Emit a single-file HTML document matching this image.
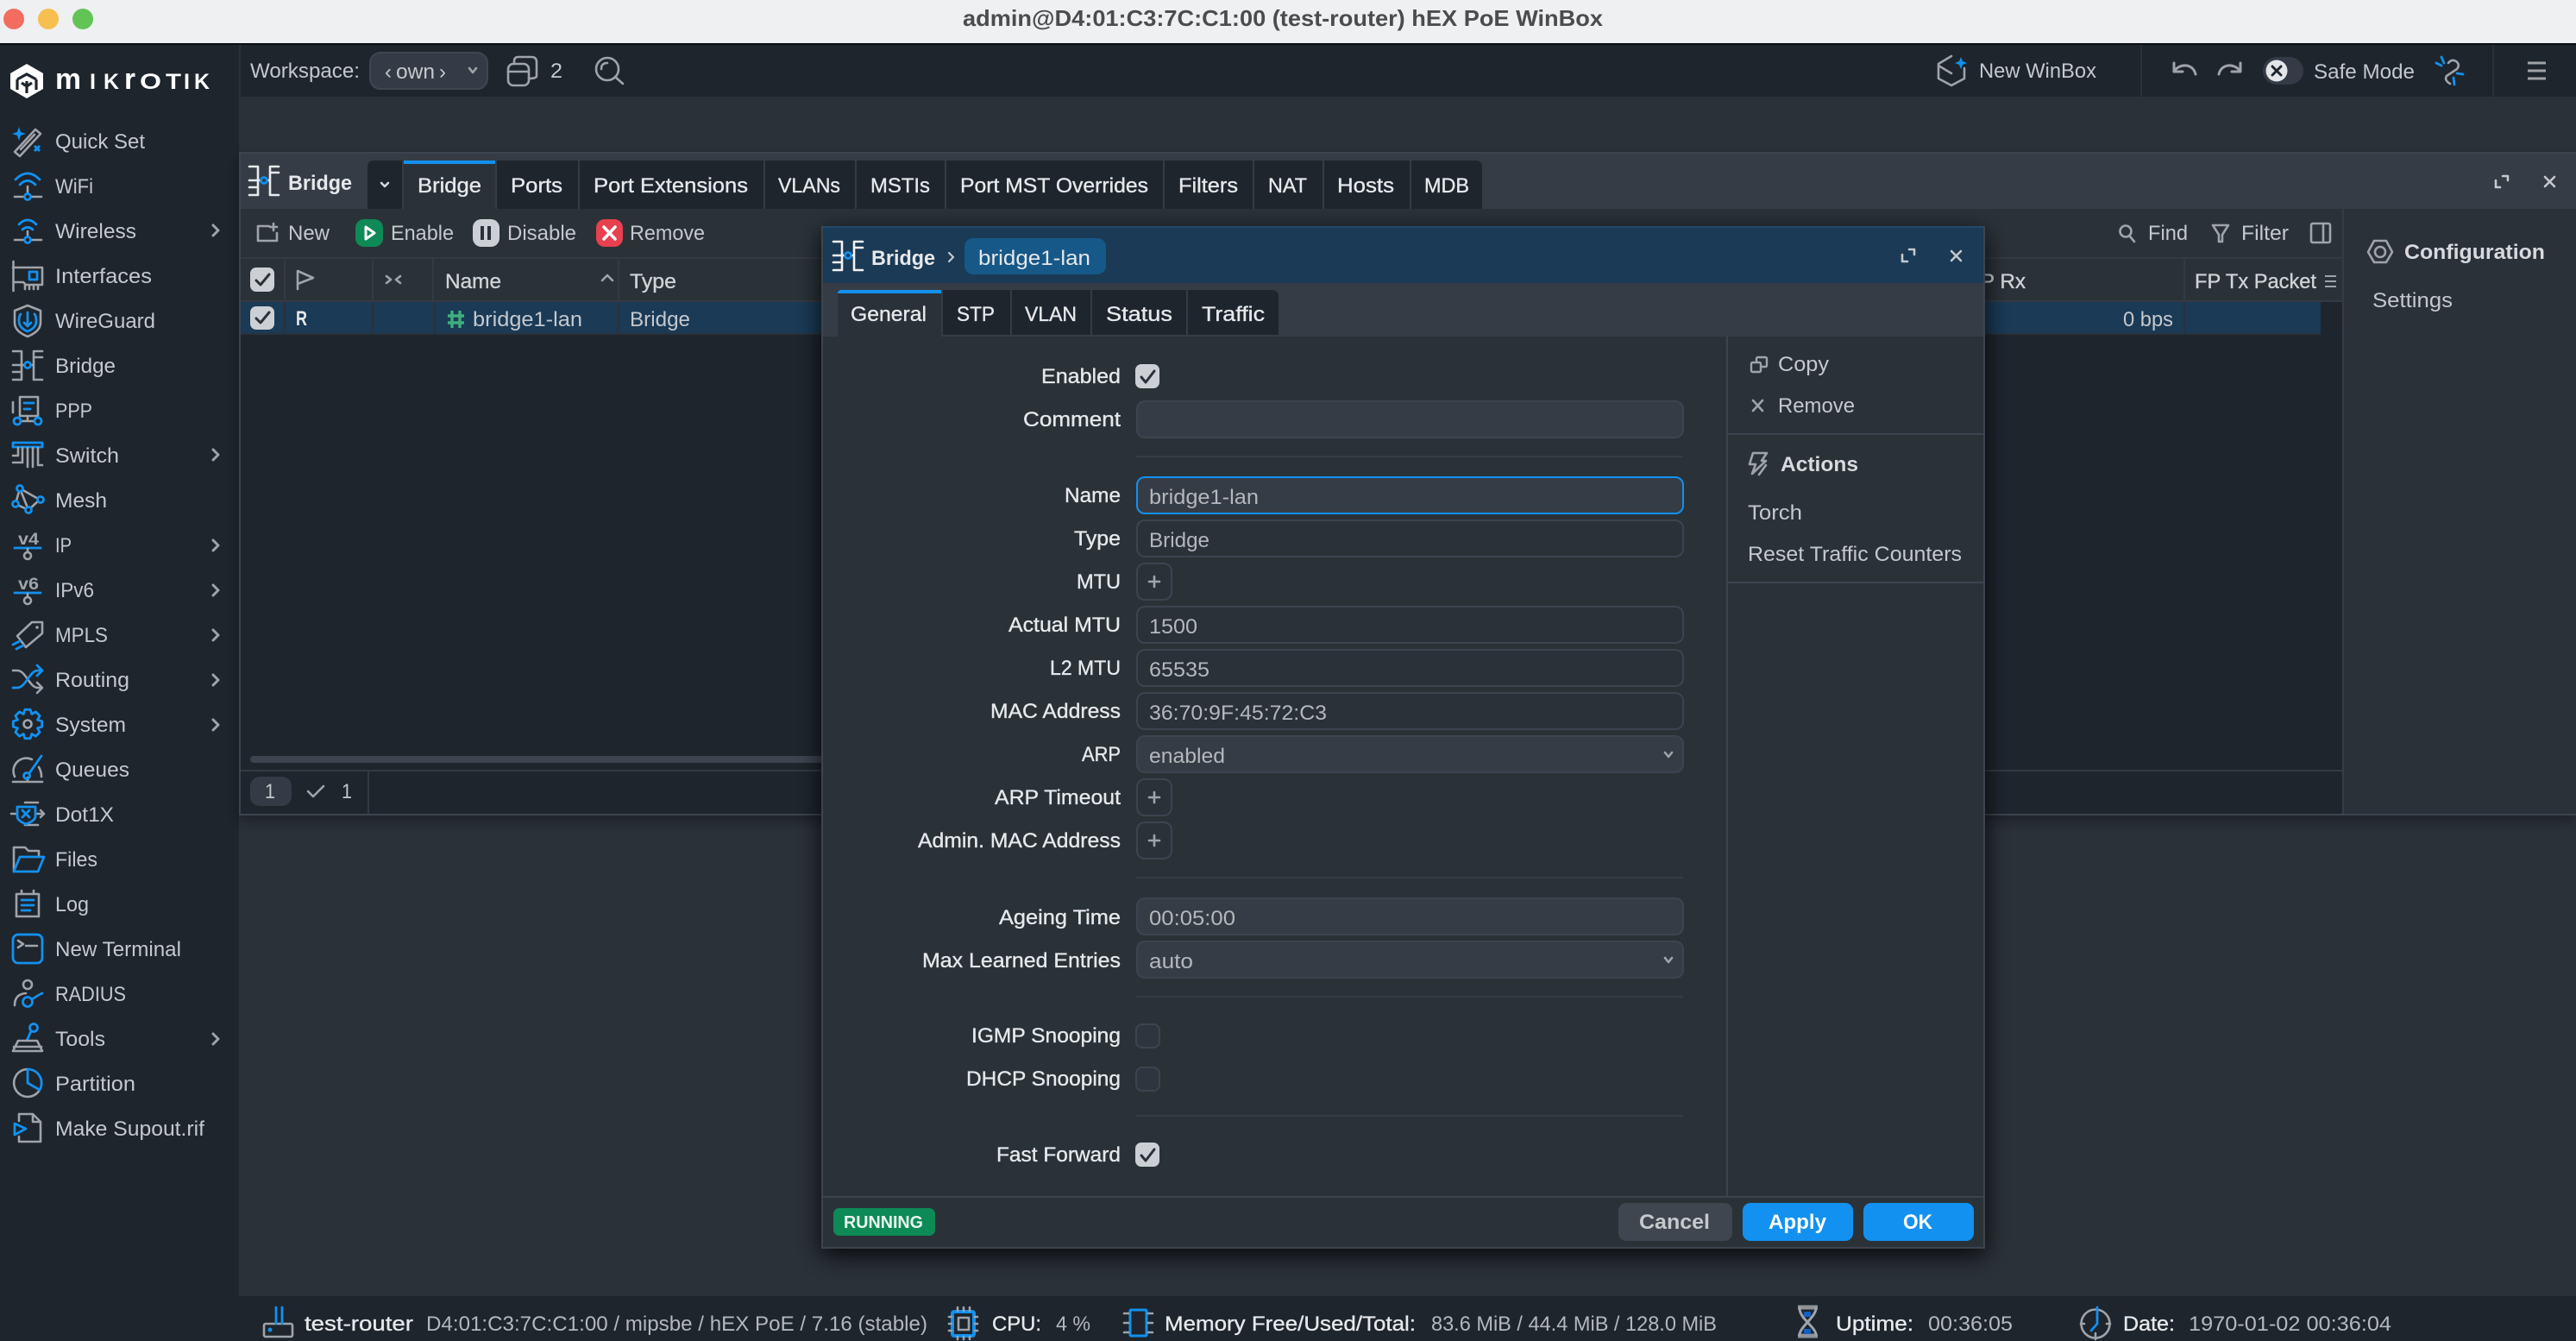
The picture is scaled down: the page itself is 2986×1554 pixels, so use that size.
<!DOCTYPE html>
<html><head><meta charset="utf-8"><title>WinBox</title>
<style>
html,body{margin:0;padding:0;background:#2b3139;width:2986px;height:1554px;overflow:hidden}
svg{display:block}
text{font-family:"Liberation Sans",sans-serif;font-size:24px;fill:#c5c8cc;white-space:pre}
.m{fill:#e6e8ea;stroke:#e6e8ea;stroke-width:.35}
.b{font-weight:700;fill:#e6e8ea}
.v{fill:#b4b8bc}
.l{font-size:25px;font-weight:700;fill:#fff}
.ll{font-size:34px;font-weight:700;fill:#fff}
.g{fill:none;stroke:#a0a4a9;stroke-width:2.6;stroke-linecap:round;stroke-linejoin:round}
.u{fill:none;stroke:#1291f0;stroke-width:2.8;stroke-linecap:round;stroke-linejoin:round}
.w{fill:none;stroke:#d5d7da;stroke-width:2.6;stroke-linecap:round;stroke-linejoin:round}
</style></head><body>
<svg xmlns="http://www.w3.org/2000/svg" width="2986" height="1554" viewBox="0 0 2986 1554">
<defs>
<filter id="s1" x="-5%" y="-10%" width="110%" height="125%"><feDropShadow dx="0" dy="6" stdDeviation="8" flood-color="#000" flood-opacity=".35"/></filter>
<filter id="s2" x="-10%" y="-10%" width="120%" height="120%"><feDropShadow dx="0" dy="8" stdDeviation="14" flood-color="#000" flood-opacity=".85"/></filter>
<g id="br"><path d="M1 1H11V34H1M1 17H11M1 25H11M25 8H35M35 1H25V34H35M11 17H14M22 17H25"/></g>
</defs>

<!-- desktop -->
<rect width="2986" height="1554" fill="#2b3139"/>

<!-- title bar -->
<rect width="2986" height="50" fill="#eff0f2"/>
<rect y="50" width="2986" height="2" fill="#0c0f12"/>
<circle cx="16" cy="22" r="12" fill="#f26d60"/>
<circle cx="56" cy="22" r="12" fill="#f7bf4f"/>
<circle cx="96" cy="22" r="12" fill="#61c454"/>
<text x="1116" y="30" textLength="742" lengthAdjust="spacingAndGlyphs" style="font-size:26px;font-weight:700;fill:#4a4c4e">admin@D4:01:C3:7C:C1:00 (test-router) hEX PoE WinBox</text>

<!-- top bar -->
<rect y="52" width="2986" height="60" fill="#1e252d"/>
<rect x="277" y="52" width="2" height="60" fill="#2b3139"/>
<text x="290" y="90" textLength="127" lengthAdjust="spacingAndGlyphs">Workspace:</text>
<rect x="429" y="61" width="136" height="42" rx="12" fill="#353b46" stroke="#3f4651" stroke-width="2"/>
<text x="446" y="91">‹</text><text x="459" y="91" textLength="45" lengthAdjust="spacingAndGlyphs">own</text><text x="509" y="91">›</text>
<path class="g" d="M544 79L548 84L552 79"/>
<path class="g" d="M596 74V71Q596 66 601 66H616Q622 66 622 72V88Q622 91 613 91"/>
<rect class="g" x="589" y="74" width="24" height="25" rx="6"/>
<path class="g" d="M589 83H613"/>
<text x="638" y="90" textLength="14" lengthAdjust="spacingAndGlyphs">2</text>
<circle class="g" cx="704" cy="80" r="13"/>
<path class="g" d="M713 89L722 97M697 80Q697 73 704 73"/>

<path class="g" d="M2262 65L2247 74V91L2262 99L2277 91V79M2247 76L2262 85"/>
<path d="M2273 66L2275 71L2280 73L2275 75L2273 80L2271 75L2266 73L2271 71Z" fill="#1291f0"/>
<text x="2294" y="90" textLength="136" lengthAdjust="spacingAndGlyphs">New WinBox</text>
<rect x="2481" y="52" width="2" height="60" fill="#2b3139"/>
<path class="g" style="stroke-width:3" d="M2520 73V83H2530M2520 83C2526 73 2542 73 2545 86"/>
<path class="g" style="stroke-width:3" d="M2597 73V83H2587M2597 83C2591 73 2575 73 2572 86"/>
<rect x="2623" y="66" width="47" height="32" rx="16" fill="#353b46"/>
<circle cx="2639" cy="82" r="12.5" fill="#e3e5e7"/>
<path d="M2634 77L2644 87M2644 77L2634 87" stroke="#1e252d" stroke-width="3" stroke-linecap="round"/>
<text x="2682" y="91" textLength="117" lengthAdjust="spacingAndGlyphs">Safe Mode</text>
<path class="g" d="M2838 73Q2842 68 2847 71Q2852 75 2848 80L2836 88Q2833 93 2840 97"/>
<path class="u" d="M2830 66L2833 73M2824 73L2830 76M2848 85L2855 86M2844 90L2845 98"/>
<rect x="2889" y="52" width="2" height="60" fill="#2b3139"/>
<path d="M2930 73H2951M2930 82H2951M2930 91H2951" stroke="#a0a4a9" stroke-width="3"/>

<!-- sidebar -->
<rect x="0" y="52" width="277" height="1502" fill="#1e252d"/>
<path d="M31 74L50 85V103L31 114L12 103V85Z" fill="#fff"/>
<path d="M20 92L31 86L42 92M20 92V104M42 92V104M31 94V108M25 96L31 100L37 96" fill="none" stroke="#1e252d" stroke-width="3.200"/>
<text x="64" y="103" textLength="30" lengthAdjust="spacingAndGlyphs" class="ll">m</text>
<text x="104" y="103" textLength="7" lengthAdjust="spacingAndGlyphs" class="l">I</text>
<text x="120" y="103" textLength="18" lengthAdjust="spacingAndGlyphs" class="l">K</text>
<text x="144" y="103" textLength="13" lengthAdjust="spacingAndGlyphs" class="ll">r</text>
<text x="162" y="103" textLength="25" lengthAdjust="spacingAndGlyphs" class="l">O</text>
<text x="192" y="103" textLength="18" lengthAdjust="spacingAndGlyphs" class="l">T</text>
<text x="213" y="103" textLength="7" lengthAdjust="spacingAndGlyphs" class="l">I</text>
<text x="225" y="103" textLength="18" lengthAdjust="spacingAndGlyphs" class="l">K</text>

<text x="64" y="172" textLength="104" lengthAdjust="spacingAndGlyphs">Quick Set</text>
<text x="64" y="224" textLength="44" lengthAdjust="spacingAndGlyphs">WiFi</text>
<text x="64" y="276" textLength="94" lengthAdjust="spacingAndGlyphs">Wireless</text>
<text x="64" y="328" textLength="112" lengthAdjust="spacingAndGlyphs">Interfaces</text>
<text x="64" y="380" textLength="116" lengthAdjust="spacingAndGlyphs">WireGuard</text>
<text x="64" y="432" textLength="70" lengthAdjust="spacingAndGlyphs">Bridge</text>
<text x="64" y="484" textLength="43" lengthAdjust="spacingAndGlyphs">PPP</text>
<text x="64" y="536" textLength="74" lengthAdjust="spacingAndGlyphs">Switch</text>
<text x="64" y="588" textLength="60" lengthAdjust="spacingAndGlyphs">Mesh</text>
<text x="64" y="640" textLength="19" lengthAdjust="spacingAndGlyphs">IP</text>
<text x="64" y="692" textLength="45" lengthAdjust="spacingAndGlyphs">IPv6</text>
<text x="64" y="744" textLength="61" lengthAdjust="spacingAndGlyphs">MPLS</text>
<text x="64" y="796" textLength="86" lengthAdjust="spacingAndGlyphs">Routing</text>
<text x="64" y="848" textLength="82" lengthAdjust="spacingAndGlyphs">System</text>
<text x="64" y="900" textLength="86" lengthAdjust="spacingAndGlyphs">Queues</text>
<text x="64" y="952" textLength="68" lengthAdjust="spacingAndGlyphs">Dot1X</text>
<text x="64" y="1004" textLength="49" lengthAdjust="spacingAndGlyphs">Files</text>
<text x="64" y="1056" textLength="39" lengthAdjust="spacingAndGlyphs">Log</text>
<text x="64" y="1108" textLength="146" lengthAdjust="spacingAndGlyphs">New Terminal</text>
<text x="64" y="1160" textLength="82" lengthAdjust="spacingAndGlyphs">RADIUS</text>
<text x="64" y="1212" textLength="58" lengthAdjust="spacingAndGlyphs">Tools</text>
<text x="64" y="1264" textLength="93" lengthAdjust="spacingAndGlyphs">Partition</text>
<text x="64" y="1316" textLength="173" lengthAdjust="spacingAndGlyphs">Make Supout.rif</text>

<!-- chevrons -->
<g fill="none" stroke="#a0a4a9" stroke-width="3" stroke-linecap="round" stroke-linejoin="round">
<path d="M247 261L253 267L247 273M247 521L253 527L247 533M247 626L253 632L247 638M247 678L253 684L247 690M247 730L253 736L247 742M247 782L253 788L247 794M247 834L253 840L247 846M247 1198L253 1204L247 1210"/>
</g>

<!-- icons -->
<g transform="translate(14,147)">
<path class="g" d="M3 29L27 3L33 8L9 34Z"/><path class="g" d="M10 26L26 9"/>
<path d="M8 0L10 6L16 8L10 10L8 16L6 10L0 8L6 6Z" fill="#1291f0"/>
<path d="M26 22L32 28M32 22L26 28" stroke="#1291f0" stroke-width="3"/>
</g>
<g><path class="u" d="M18 208Q32 194 46 208M23 214Q32 205 41 214"/><path class="g" d="M32 216V224M17 228H28M36 228H48"/><circle class="u" cx="32" cy="228" r="3.5"/></g>
<g><path class="u" d="M22 260Q32 250 42 260M26 266Q32 261 38 266"/><path class="g" d="M32 268V274M17 278H28M36 278H48"/><circle class="u" cx="32" cy="278" r="3.5"/></g>
<g><path class="g" d="M15.500 303V337M15 310H49V330H30L27 327H16M29 330V335M34 330V335M39 330V335M44 330V335"/><rect class="u" x="34" y="315" width="9" height="9"/></g>
<g><path class="g" d="M32 354L47 360V374Q47 384 32 390Q17 384 17 374V360Z"/><path class="u" d="M24 364Q22 366 22 372Q22 380 32 384Q42 380 42 372Q42 366 40 364"/><path class="u" d="M32 362V378M28 374L32 378L36 374"/></g>
<g transform="translate(14,406)"><use href="#br" class="g"/><circle class="u" cx="18" cy="17" r="3.500"/></g>
<g><path class="g" d="M23 482V460H44V482ZM15 466V478M32 482V488M24 488H40"/><path class="u" d="M28 467H39M28 474H35"/><circle class="u" cx="20" cy="488" r="4"/><circle class="u" cx="44" cy="488" r="4"/></g>
<g transform="translate(0,527)"><path class="u" d="M15 -14H49V-9H15Z"/><path class="g" d="M21 -8V1H15M26 -8V9H15M32 -8V14M38 -8V14M44 -8V12H49"/></g>
<g transform="translate(0,579)"><path class="g" d="M23 -13L46 0L33 12ZM18 5L23 -13M18 5L33 12"/><g class="u" style="fill:#1e252d"><circle cx="23" cy="-13" r="3.500"/><circle cx="47" cy="0" r="3.500"/><circle cx="33" cy="12" r="3.500"/><circle cx="18" cy="5" r="3.500"/></g></g>
<g transform="translate(0,631)"><text x="21" y="0" textLength="24" lengthAdjust="spacingAndGlyphs" style="font-size:19px;font-weight:700;fill:#a0a4a9">v4</text><path class="u" d="M17 4H47"/><path class="g" d="M32 5V9"/><circle class="g" cx="32" cy="13" r="4"/></g>
<g transform="translate(0,683)"><text x="21" y="0" textLength="24" lengthAdjust="spacingAndGlyphs" style="font-size:19px;font-weight:700;fill:#a0a4a9">v6</text><path class="u" d="M17 4H47"/><path class="g" d="M32 5V9"/><circle class="g" cx="32" cy="13" r="4"/></g>
<g transform="translate(0,735)"><path class="g" d="M37 -14H49V-1L30 15L20 2Z"/><circle cx="43" cy="-8" r="1.800" fill="#a0a4a9"/><path class="u" d="M15 12L23 8M19 17L27 13"/></g>
<g transform="translate(0,787)"><path class="g" d="M15 -10H20C30 -10 34 10 44 10H48M43 4L49 10L43 16"/><path class="u" d="M15 10H20C30 10 34 -10 44 -10H48M43 -16L49 -10L43 -4"/></g>
<g transform="translate(32,839)"><path class="u" d="M16.700 -3.200L16.700 3.200L11.500 4.800L14.100 9.500L9.500 14.100L4.800 11.500L3.200 16.700L-3.200 16.700L-4.800 11.500L-9.500 14.100L-14.100 9.500L-11.500 4.800L-16.700 3.200L-16.700 -3.200L-11.500 -4.800L-14.100 -9.500L-9.500 -14.100L-4.800 -11.500L-3.200 -16.700L3.200 -16.700L4.800 -11.500L9.500 -14.100L14.100 -9.500L11.500 -4.800Z"/><circle class="g" r="4.500"/></g>
<g transform="translate(0,891)"><path class="g" d="M17 9A15 15 0 0 1 37 -11M45 -2Q48 3 48 9M15 15H49M32 10V14"/><path class="u" d="M34 5L48 -15"/><circle class="u" cx="31" cy="8" r="3.500"/></g>
<g transform="translate(0,943)"><path class="g" d="M13 0H18M43 0H51M47 -4L51 0L47 4M29 -13H44M29 13H44"/><path class="u" d="M20 -8H41V3Q41 8 30 12Q20 8 20 3Z"/><path class="u" d="M26 -4L34 4M34 -4L26 4"/></g>
<g transform="translate(0,995)"><path class="g" d="M16 15V-13H29L33 -9H45V-3"/><path class="u" d="M16 15L23 -2H51L44 15Z"/></g>
<g transform="translate(0,1047)"><path class="g" d="M19 -11H45V15H19ZM25 -15V-11M39 -15V-11"/><path class="u" d="M25 -4H39M25 2H39M25 8H35"/></g>
<g transform="translate(0,1099)"><rect class="u" x="15" y="-16" width="34" height="33" rx="6"/><path class="g" d="M21 -9L27 -5L21 -1M30 -3H43"/></g>
<g transform="translate(0,1151)"><circle class="g" cx="32" cy="-10" r="5"/><path class="g" d="M17 14Q17 1 30 0"/><circle class="u" cx="32" cy="10" r="5.500"/><path class="u" d="M37 7L45 2M47 1L49 0"/></g>
<g transform="translate(0,1203)"><circle class="u" cx="39" cy="-12" r="4.500"/><path class="u" d="M36 -8L31 3"/><path class="g" d="M21 3H43L49 15H15ZM16 10H48"/></g>
<g transform="translate(0,1255)"><path class="g" d="M32 -16A16 16 0 1 0 46 8"/><path class="u" d="M32 -16V0L46 8A16 16 0 0 0 32 -16Z"/></g>
<g transform="translate(0,1307)"><path class="g" d="M22 -8V-16H38L47 -7V16H22V10M38 -16V-7H47"/><path class="u" d="M17 -5L30 1L17 8Z"/></g>

<!-- main window -->
<g filter="url(#s1)"><rect x="277" y="176" width="2709" height="769" fill="#2b3139"/></g>
<rect x="277" y="176" width="2709" height="2" fill="#3d4450"/>
<rect x="277" y="178" width="2709" height="64" fill="#363c46"/>
<rect x="277" y="176" width="2" height="769" fill="#3d4450"/>
<rect x="277" y="943" width="2709" height="2" fill="#3d4450"/>
<g transform="translate(288,192)"><use href="#br" class="w" style="stroke:#e8eaec"/><circle class="u" cx="18" cy="17" r="3.500"/></g>
<text x="334" y="220" textLength="74" lengthAdjust="spacingAndGlyphs" class="b">Bridge</text>

<!-- tabs -->
<g fill="#1e252d">
<path d="M426 242V194Q426 186 434 186H466V242Z"/>
<rect x="576" y="186" width="94" height="56"/>
<rect x="672" y="186" width="213" height="56"/>
<rect x="887" y="186" width="104" height="56"/>
<rect x="993" y="186" width="102" height="56"/>
<rect x="1097" y="186" width="251" height="56"/>
<rect x="1350" y="186" width="102" height="56"/>
<rect x="1454" y="186" width="79" height="56"/>
<rect x="1535" y="186" width="99" height="56"/>
<path d="M1636 186H1710Q1718 186 1718 194V242H1636Z"/>
</g>
<rect x="468" y="186" width="106" height="56" fill="#2b3139"/>
<rect x="468" y="186" width="106" height="4" fill="#1291f0"/>
<path class="w" d="M442 212L446 216L450 212"/>
<text x="484" y="223" textLength="74" lengthAdjust="spacingAndGlyphs" class="m">Bridge</text>
<text x="592" y="223" textLength="60" lengthAdjust="spacingAndGlyphs" class="m">Ports</text>
<text x="688" y="223" textLength="179" lengthAdjust="spacingAndGlyphs" class="m">Port Extensions</text>
<text x="902" y="223" textLength="72" lengthAdjust="spacingAndGlyphs" class="m">VLANs</text>
<text x="1009" y="223" textLength="69" lengthAdjust="spacingAndGlyphs" class="m">MSTIs</text>
<text x="1113" y="223" textLength="218" lengthAdjust="spacingAndGlyphs" class="m">Port MST Overrides</text>
<text x="1366" y="223" textLength="69" lengthAdjust="spacingAndGlyphs" class="m">Filters</text>
<text x="1470" y="223" textLength="45" lengthAdjust="spacingAndGlyphs" class="m">NAT</text>
<text x="1550" y="223" textLength="66" lengthAdjust="spacingAndGlyphs" class="m">Hosts</text>
<text x="1651" y="223" textLength="52" lengthAdjust="spacingAndGlyphs" class="m">MDB</text>
<path class="g" style="stroke:#c5c8cc" d="M2901 204H2907V209M2893 209V217H2898"/>
<path class="g" style="stroke:#c5c8cc" d="M2950 205L2961 216M2961 205L2950 216"/>

<!-- toolbar -->
<path class="g" d="M312 262H299V279H321V270"/><path class="g" d="M317 259V267M313 263H321"/>
<text x="334" y="278" textLength="48" lengthAdjust="spacingAndGlyphs">New</text>
<rect x="412" y="254" width="32" height="32" rx="10" fill="#0d8a55"/>
<path d="M424 263L434 270L424 277Z" fill="none" stroke="#fff" stroke-width="3" stroke-linejoin="round"/>
<text x="453" y="278" textLength="73" lengthAdjust="spacingAndGlyphs">Enable</text>
<rect x="548" y="254" width="31" height="32" rx="10" fill="#ccd0d4"/>
<path d="M559 262V278M567 262V278" stroke="#2b3139" stroke-width="4"/>
<text x="588" y="278" textLength="80" lengthAdjust="spacingAndGlyphs">Disable</text>
<rect x="691" y="254" width="31" height="32" rx="10" fill="#e7404f"/>
<path d="M700 263L713 277M713 263L700 277" stroke="#fff" stroke-width="3.500" stroke-linecap="round"/>
<text x="730" y="278" textLength="87" lengthAdjust="spacingAndGlyphs">Remove</text>

<circle class="g" cx="2464" cy="268" r="6.500"/><path class="g" d="M2469 274L2474 280"/>
<text x="2490" y="278" textLength="46" lengthAdjust="spacingAndGlyphs">Find</text>
<path class="g" d="M2565 261H2583L2576 272V280H2572V272Z"/>
<text x="2598" y="278" textLength="55" lengthAdjust="spacingAndGlyphs">Filter</text>
<rect class="g" x="2679" y="259" width="22" height="22" rx="2"/><path class="g" d="M2693 261V279"/>

<rect x="279" y="298" width="2436" height="2" fill="#343a44"/>
<rect x="279" y="348" width="2436" height="2" fill="#343a44"/>
<g fill="#343a44">
<rect x="329" y="300" width="2" height="48"/><rect x="431" y="300" width="2" height="48"/><rect x="501" y="300" width="2" height="48"/><rect x="716" y="300" width="2" height="48"/><rect x="2531" y="300" width="2" height="48"/>
</g>
<!-- table body -->
<rect x="279" y="350" width="2436" height="542" fill="#1e252d"/>
<rect x="279" y="350" width="2411" height="36" fill="#1a3a56"/>
<rect x="279" y="386" width="2411" height="2" fill="#2b3139"/>
<g fill="#2b3139"><rect x="329" y="350" width="2" height="36"/><rect x="431" y="350" width="2" height="36"/><rect x="503" y="350" width="2" height="36"/><rect x="716" y="350" width="2" height="36"/><rect x="2531" y="350" width="2" height="36"/></g>
<rect x="290" y="310" width="28" height="28" rx="7" fill="#ccd0d4"/>
<path d="M297 325L302 330L312 318" fill="none" stroke="#2b3139" stroke-width="3" stroke-linecap="round" stroke-linejoin="round"/>
<rect x="290" y="355" width="28" height="27" rx="7" fill="#ccd0d4"/>
<path d="M297 369L302 374L312 362" fill="none" stroke="#2b3139" stroke-width="3" stroke-linecap="round" stroke-linejoin="round"/>
<path class="g" d="M345 335V314L363 322L345 329"/>
<path class="g" d="M448 320L453 324L448 328M464 320L459 324L464 328"/>
<text x="516" y="334" textLength="65" lengthAdjust="spacingAndGlyphs" class="m" style="fill:#d0d3d6;stroke:#d0d3d6">Name</text>
<path class="g" d="M698 325L704 319L710 325"/>
<text x="730" y="334" textLength="54" lengthAdjust="spacingAndGlyphs" class="m" style="fill:#d0d3d6;stroke:#d0d3d6">Type</text>
<text x="343" y="377" textLength="13" lengthAdjust="spacingAndGlyphs" class="b">R</text>
<path d="M524 360V380M533 360V380M519 366H538M519 374H538" stroke="#3fae7e" stroke-width="3.400" fill="none"/>
<text x="548" y="378" textLength="127" lengthAdjust="spacingAndGlyphs">bridge1-lan</text>
<text x="730" y="378" textLength="70" lengthAdjust="spacingAndGlyphs">Bridge</text>
<text x="2461" y="378" textLength="58" lengthAdjust="spacingAndGlyphs">0 bps</text>
<text x="2281" y="334" textLength="67" lengthAdjust="spacingAndGlyphs" class="m" style="fill:#d0d3d6;stroke:#d0d3d6">FP Rx</text>
<text x="2544" y="334" textLength="141" lengthAdjust="spacingAndGlyphs" class="m" style="fill:#d0d3d6;stroke:#d0d3d6">FP Tx Packet</text>
<path d="M2695 320H2708M2695 326H2708M2695 332H2708" stroke="#a0a4a9" stroke-width="2"/>
<rect x="290" y="876" width="1000" height="8" rx="4" fill="#3d4450"/>
<!-- footer -->
<rect x="279" y="892" width="2436" height="2" fill="#343a44"/>
<rect x="279" y="894" width="2436" height="49" fill="#1e252d"/>
<rect x="290" y="900" width="48" height="34" rx="11" fill="#353b46"/>
<text x="307" y="925" textLength="12" lengthAdjust="spacingAndGlyphs">1</text>
<path class="g" d="M357 917L363 923L375 911"/>
<text x="396" y="925" textLength="12" lengthAdjust="spacingAndGlyphs">1</text>
<rect x="426" y="894" width="2" height="49" fill="#343a44"/>
<!-- right panel -->
<rect x="2715" y="242" width="271" height="701" fill="#2b3139"/>
<rect x="2715" y="242" width="2" height="701" fill="#363c46"/>
<path class="g" d="M2752 279H2766L2773 292L2766 304H2752L2745 292Z"/><circle class="g" cx="2759" cy="292" r="6"/>
<text x="2787" y="300" textLength="163" lengthAdjust="spacingAndGlyphs" class="b" style="fill:#d8dadd">Configuration</text>
<text x="2750" y="356" textLength="93" lengthAdjust="spacingAndGlyphs">Settings</text>

<!-- status bar -->
<rect x="277" y="1502" width="2709" height="52" fill="#1e252d"/>
<rect class="g" x="306" y="1534" width="33" height="15" rx="2"/>
<path class="u" d="M320 1515V1534M327 1515V1534"/><circle cx="313" cy="1541" r="2.500" fill="#1291f0"/>
<text x="353" y="1542" textLength="126" lengthAdjust="spacingAndGlyphs" class="m">test-router</text>
<text x="494" y="1542" textLength="581" lengthAdjust="spacingAndGlyphs" class="v">D4:01:C3:7C:C1:00 / mipsbe / hEX PoE / 7.16 (stable)</text>
<rect x="1104" y="1520" width="25" height="28" rx="2" fill="none" stroke="#1291f0" stroke-width="4"/>
<rect class="g" x="1111" y="1527" width="12" height="14"/>
<path class="g" d="M1110 1515V1519M1117 1515V1519M1124 1515V1519M1110 1549V1552M1117 1549V1552M1124 1549V1552M1100 1526H1103M1100 1534H1103M1100 1542H1103M1130 1526H1133M1130 1534H1133M1130 1542H1133"/>
<text x="1150" y="1542" textLength="57" lengthAdjust="spacingAndGlyphs" class="m">CPU:</text>
<text x="1224" y="1542" textLength="40" lengthAdjust="spacingAndGlyphs" class="v">4 %</text>
<rect x="1310" y="1518" width="19" height="30" rx="1" fill="none" stroke="#1291f0" stroke-width="3"/>
<path class="g" d="M1303 1522H1308M1303 1533H1308M1303 1544H1308M1331 1522H1336M1331 1533H1336M1331 1544H1336"/>
<text x="1350" y="1542" textLength="291" lengthAdjust="spacingAndGlyphs" class="m">Memory Free/Used/Total:</text>
<text x="1659" y="1542" textLength="331" lengthAdjust="spacingAndGlyphs" class="v">83.6 MiB / 44.4 MiB / 128.0 MiB</text>
<path d="M2084 1515H2107M2084 1548H2107" stroke="#8f9398" stroke-width="5"/>
<path class="g" style="stroke-width:3" d="M2086 1516C2086 1528 2105 1538 2105 1547M2105 1516C2105 1526 2086 1538 2086 1547"/>
<rect x="2091" y="1520" width="8" height="6" fill="#1460c0"/><rect x="2091" y="1540" width="8" height="6" fill="#1460c0"/>
<text x="2128" y="1542" textLength="90" lengthAdjust="spacingAndGlyphs" class="m">Uptime:</text>
<text x="2235" y="1542" textLength="98" lengthAdjust="spacingAndGlyphs" class="v">00:36:05</text>
<circle class="g" cx="2429" cy="1534" r="16.500"/>
<path class="g" d="M2429 1545V1552M2412 1534H2416M2442 1534H2446"/>
<path class="u" d="M2431 1515V1534L2424 1542"/>
<text x="2461" y="1542" textLength="60" lengthAdjust="spacingAndGlyphs" class="m">Date:</text>
<text x="2537" y="1542" textLength="235" lengthAdjust="spacingAndGlyphs" class="v">1970-01-02 00:36:04</text>

<!-- dialog -->
<g filter="url(#s2)"><rect x="952" y="262" width="1349" height="1185" fill="#2b3139"/></g>
<rect x="952" y="262" width="1349" height="66" fill="#1a3a56"/>
<rect x="952" y="262" width="1349" height="2" fill="#23496b"/>
<rect x="952" y="328" width="1349" height="62" fill="#363c46"/>
<rect x="952" y="262" width="2" height="1185" fill="#3d4450"/>
<rect x="2299" y="262" width="2" height="1185" fill="#3d4450"/>
<rect x="952" y="1445" width="1349" height="2" fill="#3d4450"/>
<rect x="952" y="1386" width="1349" height="2" fill="#3d4450"/>
<rect x="2001" y="390" width="2" height="996" fill="#3d4450"/>
<g transform="translate(965,279)"><use href="#br" class="w" style="stroke:#f2f3f4"/><circle class="u" cx="18" cy="17" r="3.500"/></g>
<text x="1010" y="307" textLength="74" lengthAdjust="spacingAndGlyphs" class="b">Bridge</text>
<path class="g" style="stroke:#c5c8cc;stroke-width:2.2" d="M1100 293L1105 298L1100 303"/>
<rect x="1118" y="276" width="164" height="42" rx="10" fill="#165888"/>
<text x="1134" y="307" textLength="130" lengthAdjust="spacingAndGlyphs" style="fill:#e6e8ea">bridge1-lan</text>
<path class="g" style="stroke:#c5c8cc" d="M2213 289H2219V295M2205 295V303H2211"/>
<path class="g" style="stroke:#c5c8cc" d="M2262 291L2273 302M2273 291L2262 302"/>

<path d="M1091 336H1175V388H1091ZM1173 336H1264V388H1173ZM1266 336H1375V388H1266ZM1377 336H1474Q1482 336 1482 344V388H1377Z" fill="#1e252d"/>
<path d="M1091 336H1093V388H1091ZM1171 336H1173V388H1171ZM1264 336H1266V388H1264ZM1375 336H1377V388H1375Z" fill="#363c46"/>
<rect x="971" y="336" width="120" height="54" fill="#2b3139"/>
<path d="M971 340Q971 336 975 336H1091V340Z" fill="#1291f0"/>
<text x="986" y="372" textLength="88" lengthAdjust="spacingAndGlyphs" class="m">General</text>
<text x="1109" y="372" textLength="44" lengthAdjust="spacingAndGlyphs" class="m">STP</text>
<text x="1188" y="372" textLength="60" lengthAdjust="spacingAndGlyphs" class="m">VLAN</text>
<text x="1282" y="372" textLength="77" lengthAdjust="spacingAndGlyphs" class="m">Status</text>
<text x="1393" y="372" textLength="73" lengthAdjust="spacingAndGlyphs" class="m">Traffic</text>

<!-- form labels -->
<text x="1207" y="444" textLength="92" lengthAdjust="spacingAndGlyphs" class="m">Enabled</text>
<text x="1186" y="494" textLength="113" lengthAdjust="spacingAndGlyphs" class="m">Comment</text>
<text x="1234" y="582" textLength="65" lengthAdjust="spacingAndGlyphs" class="m">Name</text>
<text x="1245" y="632" textLength="54" lengthAdjust="spacingAndGlyphs" class="m">Type</text>
<text x="1248" y="682" textLength="51" lengthAdjust="spacingAndGlyphs" class="m">MTU</text>
<text x="1169" y="732" textLength="130" lengthAdjust="spacingAndGlyphs" class="m">Actual MTU</text>
<text x="1217" y="782" textLength="82" lengthAdjust="spacingAndGlyphs" class="m">L2 MTU</text>
<text x="1148" y="832" textLength="151" lengthAdjust="spacingAndGlyphs" class="m">MAC Address</text>
<text x="1254" y="882" textLength="45" lengthAdjust="spacingAndGlyphs" class="m">ARP</text>
<text x="1153" y="932" textLength="146" lengthAdjust="spacingAndGlyphs" class="m">ARP Timeout</text>
<text x="1064" y="982" textLength="235" lengthAdjust="spacingAndGlyphs" class="m">Admin. MAC Address</text>
<text x="1158" y="1071" textLength="141" lengthAdjust="spacingAndGlyphs" class="m">Ageing Time</text>
<text x="1069" y="1121" textLength="230" lengthAdjust="spacingAndGlyphs" class="m">Max Learned Entries</text>
<text x="1126" y="1208" textLength="173" lengthAdjust="spacingAndGlyphs" class="m">IGMP Snooping</text>
<text x="1120" y="1258" textLength="179" lengthAdjust="spacingAndGlyphs" class="m">DHCP Snooping</text>
<text x="1155" y="1346" textLength="144" lengthAdjust="spacingAndGlyphs" class="m">Fast Forward</text>

<!-- form fields -->
<rect x="1316" y="422" width="28" height="28" rx="7" fill="#ccd0d4"/>
<path d="M1323 437L1328 443L1338 430" fill="none" stroke="#2b3139" stroke-width="3" stroke-linecap="round" stroke-linejoin="round"/>
<g stroke="#3d4450" stroke-width="2">
<rect x="1318" y="465" width="633" height="42" rx="9" fill="#363c46"/>
<rect x="1318" y="603" width="633" height="42" rx="9" fill="#2b3139"/>
<rect x="1318" y="653" width="40" height="42" rx="9" fill="#2b3139"/>
<rect x="1318" y="703" width="633" height="42" rx="9" fill="#2b3139"/>
<rect x="1318" y="753" width="633" height="42" rx="9" fill="#2b3139"/>
<rect x="1318" y="803" width="633" height="42" rx="9" fill="#2b3139"/>
<rect x="1318" y="853" width="633" height="42" rx="9" fill="#363c46"/>
<rect x="1318" y="903" width="40" height="42" rx="9" fill="#2b3139"/>
<rect x="1318" y="953" width="40" height="42" rx="9" fill="#2b3139"/>
<rect x="1318" y="1041" width="633" height="42" rx="9" fill="#363c46"/>
<rect x="1318" y="1091" width="633" height="42" rx="9" fill="#363c46"/>
<rect x="1317" y="1187" width="27" height="27" rx="7" fill="#2f353f"/>
<rect x="1317" y="1237" width="27" height="27" rx="7" fill="#2f353f"/>
</g>
<rect x="1318" y="553" width="633" height="42" rx="9" fill="#363c46" stroke="#1291f0" stroke-width="2"/>
<g fill="#363c46"><rect x="1317" y="528" width="634" height="2"/><rect x="1317" y="1016" width="634" height="2"/><rect x="1317" y="1154" width="634" height="2"/><rect x="1317" y="1292" width="634" height="2"/></g>
<rect x="1316" y="1324" width="28" height="28" rx="7" fill="#ccd0d4"/>
<path d="M1323 1339L1328 1345L1338 1332" fill="none" stroke="#2b3139" stroke-width="3" stroke-linecap="round" stroke-linejoin="round"/>
<text x="1332" y="584" textLength="127" lengthAdjust="spacingAndGlyphs" class="v">bridge1-lan</text>
<text x="1332" y="634" textLength="70" lengthAdjust="spacingAndGlyphs" class="v">Bridge</text>
<path class="g" d="M1338 668V680M1332 674H1344"/>
<text x="1332" y="734" textLength="56" lengthAdjust="spacingAndGlyphs" class="v">1500</text>
<text x="1332" y="784" textLength="70" lengthAdjust="spacingAndGlyphs" class="v">65535</text>
<text x="1332" y="834" textLength="206" lengthAdjust="spacingAndGlyphs" class="v">36:70:9F:45:72:C3</text>
<text x="1332" y="884" textLength="88" lengthAdjust="spacingAndGlyphs" class="v">enabled</text>
<path class="g" d="M1930 872L1934 877L1938 872"/>
<path class="g" d="M1338 918V930M1332 924H1344"/>
<path class="g" d="M1338 968V980M1332 974H1344"/>
<text x="1332" y="1072" textLength="100" lengthAdjust="spacingAndGlyphs" class="v">00:05:00</text>
<text x="1332" y="1122" textLength="51" lengthAdjust="spacingAndGlyphs" class="v">auto</text>
<path class="g" d="M1930 1110L1934 1115L1938 1110"/>

<!-- dialog right panel -->
<rect class="g" style="stroke-width:2.4" x="2036" y="414" width="12" height="11" rx="1.500"/>
<rect class="g" style="stroke-width:2.4;fill:#2b3139" x="2030" y="420" width="11" height="11" rx="1.500"/>
<text x="2061" y="430" textLength="59" lengthAdjust="spacingAndGlyphs">Copy</text>
<path class="g" d="M2032 464L2043 476M2043 464L2032 476"/>
<text x="2061" y="478" textLength="89" lengthAdjust="spacingAndGlyphs">Remove</text>
<rect x="2003" y="502" width="296" height="2" fill="#3d4450"/>
<path class="g" d="M2032 525H2048L2042 534H2047L2031 549L2035 538H2028ZM2047 539L2039 550"/>
<text x="2064" y="546" textLength="90" lengthAdjust="spacingAndGlyphs" class="b" style="fill:#d8dadd">Actions</text>
<text x="2026" y="602" textLength="63" lengthAdjust="spacingAndGlyphs">Torch</text>
<text x="2026" y="650" textLength="248" lengthAdjust="spacingAndGlyphs">Reset Traffic Counters</text>
<rect x="2003" y="674" width="296" height="2" fill="#3d4450"/>

<!-- dialog footer -->
<rect x="966" y="1400" width="118" height="32" rx="7" fill="#0d8a55"/>
<text x="978" y="1423" textLength="92" lengthAdjust="spacingAndGlyphs" style="font-size:20px;font-weight:700;fill:#e8f5ee">RUNNING</text>
<rect x="1876" y="1394" width="132" height="44" rx="9" fill="#3f464f"/>
<text x="1900" y="1424" textLength="82" lengthAdjust="spacingAndGlyphs" style="font-weight:700;fill:#c5c8cc">Cancel</text>
<rect x="2020" y="1394" width="128" height="44" rx="9" fill="#1291f0"/>
<text x="2050" y="1424" textLength="67" lengthAdjust="spacingAndGlyphs" style="font-weight:700;fill:#fff">Apply</text>
<rect x="2160" y="1394" width="128" height="44" rx="9" fill="#1291f0"/>
<text x="2206" y="1424" textLength="34" lengthAdjust="spacingAndGlyphs" style="font-weight:700;fill:#fff">OK</text>
</svg>
</body></html>
